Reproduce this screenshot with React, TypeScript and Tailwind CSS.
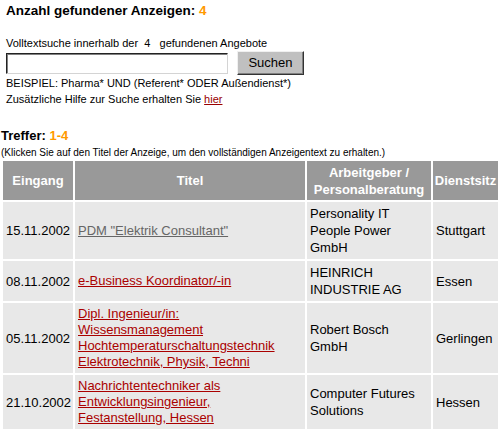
const rows = [
  {
    date: "15.11.2002",
    title: ["PDM \"Elektrik Consultant\""],
    visited: true,
    employer: ["Personality IT", "People Power", "GmbH"],
    place: "Stuttgart",
  },
  {
    date: "08.11.2002",
    title: ["e-Business Koordinator/-in"],
    visited: false,
    employer: ["HEINRICH", "INDUSTRIE AG"],
    place: "Essen",
  },
  {
    date: "05.11.2002",
    title: [
      "Dipl. Ingenieur/in:",
      "Wissensmanagement",
      "Hochtemperaturschaltungstechnik",
      "Elektrotechnik, Physik, Techni",
    ],
    visited: false,
    employer: ["Robert Bosch", "GmbH"],
    place: "Gerlingen",
  },
  {
    date: "21.10.2002",
    title: ["Nachrichtentechniker als", "Entwicklungsingenieur,", "Festanstellung, Hessen"],
    visited: false,
    employer: ["Computer Futures", "Solutions"],
    place: "Hessen",
  },
];

const lines = (items: string[]) =>
  items.map((t, i) => (
    <span key={i}>
      {i > 0 && <br />}
      {t}
    </span>
  ));

const App = () => {
  return (
    <div className="w-[500px] h-[444px] overflow-hidden bg-white text-black font-['Liberation_Sans',Arial,Helvetica,sans-serif]">
      <div className="pl-[6px]">
        <h1 className="pt-[3px] text-[13.5px] leading-[16px] font-bold">
          Anzahl gefundener Anzeigen: <span className="text-[#ff9900]">4</span>
        </h1>

        <p className="mt-[18px] text-[11px] leading-[13px] whitespace-pre">
          Volltextsuche innerhalb der{"  "}4{"  "} gefundenen Angebote
        </p>
        <div className="flex items-start mt-[1px]">
          <input
            type="text"
            className="mt-[2px] w-[222px] h-[21px] bg-white border border-t-[#222] border-l-[#222] border-b-[#d4d4d4] border-r-[#d4d4d4] shadow-[inset_1px_1px_0_#808080] outline-none"
          />
          <button className="ml-[9px] w-[67px] h-[24px] bg-[#c0c0c0] text-[13px] leading-[16px] border border-t-[#f0f0f0] border-l-[#f0f0f0] border-b-[#333] border-r-[#333] shadow-[inset_-1px_-1px_0_#808080]">
            Suchen
          </button>
        </div>
        <p className="text-[11px] leading-[16px]">
          BEISPIEL: Pharma* UND (Referent* ODER Außendienst*)
        </p>
        <p className="text-[11px] leading-[16px]">
          Zusätzliche Hilfe zur Suche erhalten Sie{" "}
          <a href="#" className="text-[#990000] underline">
            hier
          </a>
        </p>
      </div>

      <div className="pl-[1px]">
        <h2 className="mt-[21px] text-[13px] leading-[16px] font-bold">
          Treffer: <span className="text-[#ff9900]">1-4</span>
        </h2>
        <p className="mt-[3px] text-[10px] leading-[12px]">
          (Klicken Sie auf den Titel der Anzeige, um den vollständigen Anzeigentext zu erhalten.)
        </p>

        <table className="border-separate border-spacing-[2px] text-[13px] table-fixed w-[499px]">
          <colgroup>
            <col className="w-[70px]" />
            <col className="w-[230px]" />
            <col className="w-[124px]" />
            <col className="w-[65px]" />
          </colgroup>
          <thead>
            <tr className="bg-[#999999] text-white font-bold text-center leading-[17px]">
              <th className="h-[39px] px-[2px] py-[2px] font-bold">Eingang</th>
              <th className="px-[2px] py-[2px] font-bold">Titel</th>
              <th className="px-[2px] py-[2px] font-bold">
                Arbeitgeber /<br />
                Personalberatung
              </th>
              <th className="px-[1px] py-[2px] font-bold">Dienstsitz</th>
            </tr>
          </thead>
          <tbody>
            {rows.map((r) => (
              <tr key={r.date} className="bg-[#e8e8e8] align-middle">
                <td className="p-[3px] leading-[17px] whitespace-nowrap">{r.date}</td>
                <td className="p-[3px] leading-[16px] whitespace-nowrap">
                  <a
                    href="#"
                    className={r.visited ? "text-[#666666] underline" : "text-[#aa0000] underline"}
                  >
                    {lines(r.title)}
                  </a>
                </td>
                <td className="p-[3px] leading-[17px] whitespace-nowrap">{lines(r.employer)}</td>
                <td className="p-[3px] leading-[17px]">{r.place}</td>
              </tr>
            ))}
          </tbody>
        </table>
      </div>
    </div>
  );
};

export default App;
